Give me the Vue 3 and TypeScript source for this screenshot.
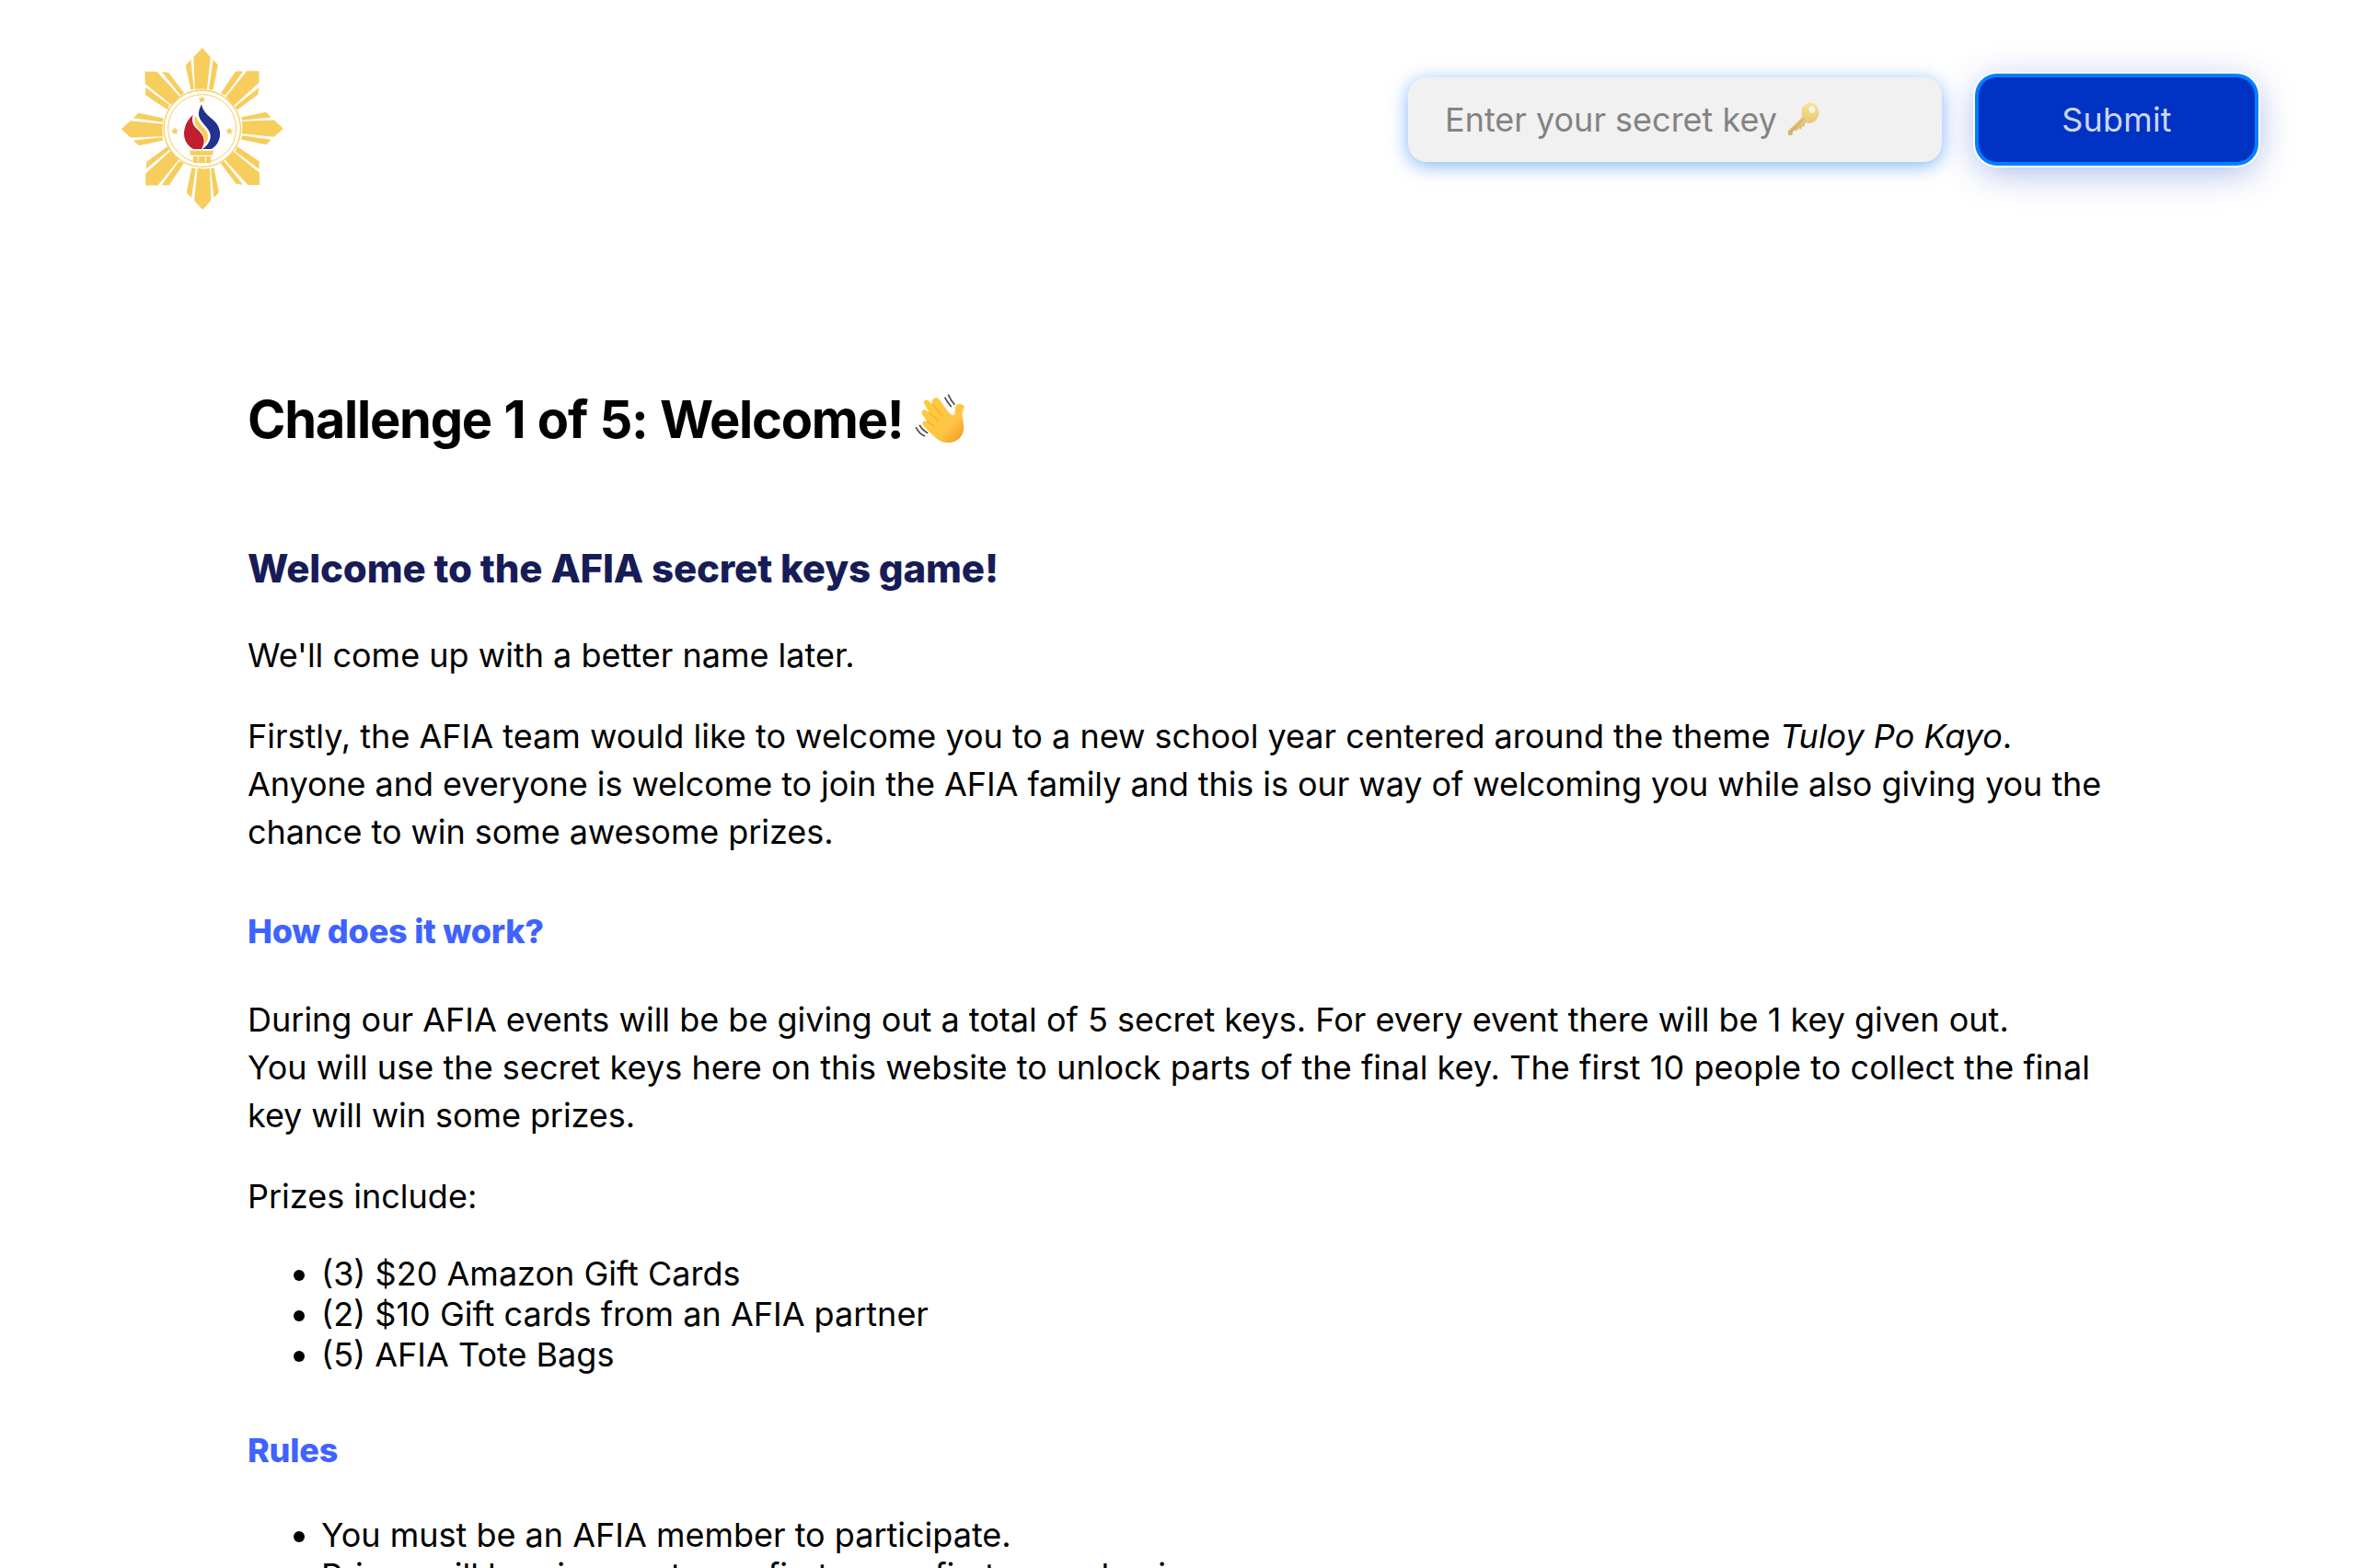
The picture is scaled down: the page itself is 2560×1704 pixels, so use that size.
<script setup lang="ts">
const prizes: string[] = [
  '(3) $20 Amazon Gift Cards',
  '(2) $10 Gift cards from an AFIA partner',
  '(5) AFIA Tote Bags',
]
const rules: string[] = [
  'You must be an AFIA member to participate.',
  'Prizes will be given out on a first come first serve basis.',
]
const turns: number[] = [0, 90, 180, 270]
</script>

<template>
  <div class="page">
    <header class="bar">
      <svg class="logo" viewBox="0 0 600 600" role="img" aria-label="AFIA">
        <g fill="#f7cd5d">
          <g v-for="a in turns" :key="a" :transform="`rotate(${a} 299.5 300)`">
            <path d="M299 36L326 66L315 172Q299 168 275 171L271 66Z" />
            <path d="M262 75L272 170L262 173L245 93Z" />
            <path d="M335 75L351 92L334 174L321 170Z" />
          </g>
          <g v-for="a in turns" :key="'d' + a" :transform="`rotate(${a} 299.5 298)`">
            <path d="M113 113H151L226 195L197 221L113 153Z" />
            <path d="M167 114L190 117L240 184L229 191Z" />
            <path d="M114 165L192 222L186 238L114 190Z" />
          </g>
        </g>
        <circle cx="299" cy="299" r="125" fill="#fff" stroke="#f7cd5d" stroke-width="4" />
        <circle cx="299" cy="299" r="111" fill="none" stroke="#f7cd5d" stroke-width="3" />
        <g fill="#f7cd5d">
          <path id="star" d="M298 192l3.8 8 8.2 1-6.2 5.8 1.8 8.4-7.6-4.2-7.6 4.2 1.8-8.4-6.2-5.8 8.2-1z" />
          <use href="#star" x="-88" y="103" />
          <use href="#star" x="90" y="103" />
          <path d="M275 259C281 257 286 281 304 296C323 315 322 336 308 350C312 324 294 308 282 293Q271 279 275 259Z" />
          <path d="M257 371H337L332 386H262ZM270 390H284V411H270ZM287 390H309V411H287ZM312 390H327V411H312Z" />
        </g>
        <path fill="#c01f2e" d="M269 254C264 273 268 287 281 299C309 324 310 342 297 366H271C248 354 239 334 240 311C243 285 253 270 269 254Z" />
        <path fill="#22328f" d="M297 220C301 245 319 257 337 273C358 293 363 319 351 343C345 355 337 362 328 366H300C314 357 326 342 326 325C327 305 307 290 295 273C282 253 289 238 297 220Z" />
      </svg>
      <form class="entry" @submit.prevent>
        <div class="field">
          <span>Enter your secret key</span>
          <svg class="key" viewBox="0 0 40 40">
            <defs>
              <linearGradient id="kg" x1="0" y1="0" x2="0" y2="1">
                <stop offset="0" stop-color="#fae58d" />
                <stop offset="1" stop-color="#d5b56c" />
              </linearGradient>
            </defs>
            <path fill="url(#kg)" fill-rule="evenodd" d="M20 4C25-1 33 0 36 6C39 12 37 20 31 23C27 25 24 24 23 23L21 25V28H18L17 31L14 30L12 33L9 32L7 35V38H2V33L18 17C17 12 17 7 20 4ZM28 4A4 4 0 1 0 32 12A5 5 0 0 0 28 4Z" />
            <path d="M4 35L20 19" stroke="#bd9b5b" stroke-width="1" />
          </svg>
        </div>
        <button class="submit" type="submit">Submit</button>
      </form>
    </header>
    <main class="content">
      <h1>
        <span>Challenge 1 of 5: Welcome!</span>
        <svg class="wave" viewBox="0 0 180 190">
          <defs>
            <linearGradient id="wg" x1="0" y1="0" x2="1" y2="1">
              <stop offset="0" stop-color="#ffcb3c" />
              <stop offset=".65" stop-color="#ffc445" />
              <stop offset="1" stop-color="#ee951b" />
            </linearGradient>
          </defs>
          <g fill="none" stroke="#4a4a4c" stroke-width="5" stroke-linecap="round">
            <path d="M99 22Q108 39 118 50M110 13Q117 30 129 43M4 120Q13 138 31 147M16 113Q23 127 41 137" />
          </g>
          <path fill="url(#wg)" d="M30 40C26 30 36 24 45 32L57 43C54 34 57 24 68 22C76 20 80 27 84 33L109 68C117 78 124 82 129 77C134 70 129 58 134 49C140 38 150 42 158 46C166 50 157 59 156 68C153 83 159 99 160 116C162 148 137 169 110 169C82 169 67 153 51 137L27 112C20 102 29 94 40 100L24 76C17 65 29 56 39 65L47 71Z" />
          <g fill="none" stroke="#e79a20" stroke-width="2.5" stroke-linecap="round">
            <path d="M46 70L77 97M58 44L90 82M40 100L63 115" />
          </g>
        </svg>
      </h1>
      <h2>Welcome to the AFIA secret keys game!</h2>
      <p>We'll come up with a better name later.</p>
      <p>
        Firstly, the AFIA team would like to welcome you to a new school year centered around the theme
        <em>Tuloy Po Kayo</em>.<br /><span class="tight">Anyone and everyone is welcome to join the AFIA family and this is our way of
        welcoming you while also giving you the</span><br /><span class="tight">chance to win some awesome prizes.</span>
      </p>
      <h3>How does it work?</h3>
      <p>
        During our AFIA events will be be giving out a total of 5 secret keys. For every event there will be 1 key given
        out.<br /><span class="loose">You will use the secret keys here on this website to unlock parts of the final key. The first 10 people
        to collect the final</span><br /><span class="tight">key will win some prizes.</span>
      </p>
      <p>Prizes include:</p>
      <ul>
        <li v-for="item in prizes" :key="item">{{ item }}</li>
      </ul>
      <h3>Rules</h3>
      <ul>
        <li v-for="item in rules" :key="item">{{ item }}</li>
      </ul>
    </main>
  </div>
</template>

<style>
body {
  margin: 0;
  background: #fff;
}
</style>

<style scoped>
.page {
  box-sizing: border-box;
  width: 2560px;
  height: 1704px;
  overflow: hidden;
  font-family: Inter, sans-serif;
  font-size: 36px;
  color: #000;
}
.bar {
  display: flex;
  justify-content: space-between;
  align-items: flex-start;
  padding: 40px 110px 0 120px;
  height: 200px;
}
.logo {
  width: 200px;
  height: 200px;
}
.entry {
  display: flex;
  align-items: center;
  gap: 40px;
  margin-top: 44px;
}
.field {
  box-sizing: border-box;
  display: flex;
  align-items: center;
  gap: 10px;
  width: 580px;
  height: 92px;
  padding: 0 40px;
  border-radius: 20px;
  background: #f1f1f1;
  color: #838383;
  white-space: nowrap;
  box-shadow: 0 4px 20px rgba(0, 112, 243, 0.5);
}
.key {
  width: 38px;
  height: 38px;
}
.submit {
  box-sizing: border-box;
  width: 300px;
  height: 92px;
  padding: 0;
  border: 0;
  border-radius: 20px;
  background: #0032c3;
  color: #ccd6f3;
  font: inherit;
  letter-spacing: 0.2px;
  box-shadow: 0 0 0 4px #0080ff, 0 0 0 6px #fff, 0 8px 40px rgba(0, 50, 195, 0.4);
}
.content {
  padding: 180px 268px 0 269px;
  white-space: nowrap;
}
h1 {
  display: flex;
  align-items: center;
  gap: 13px;
  margin: 0 0 100px;
  height: 72px;
  font-size: 56px;
  line-height: 72px;
  letter-spacing: -1.25px;
  word-spacing: 1.5px;
}
.wave {
  width: 60px;
  height: 63px;
}
h2 {
  margin: 0 0 42px;
  height: 52px;
  line-height: 52px;
  font-size: 42px;
  font-weight: 800;
  letter-spacing: -0.17px;
  color: #171c57;
}
p {
  margin: 36px 0;
  line-height: 52px;
}
.tight {
  letter-spacing: -0.07px;
}
.loose {
  letter-spacing: 0.05px;
}
h3 {
  margin: 60px 0 48px;
  line-height: 44px;
  font-size: 36px;
  font-weight: 800;
  letter-spacing: -0.22px;
  color: #3e63ff;
}
ul {
  margin: 36px 0;
  padding-left: 80px;
}
li {
  line-height: 44px;
}
</style>
